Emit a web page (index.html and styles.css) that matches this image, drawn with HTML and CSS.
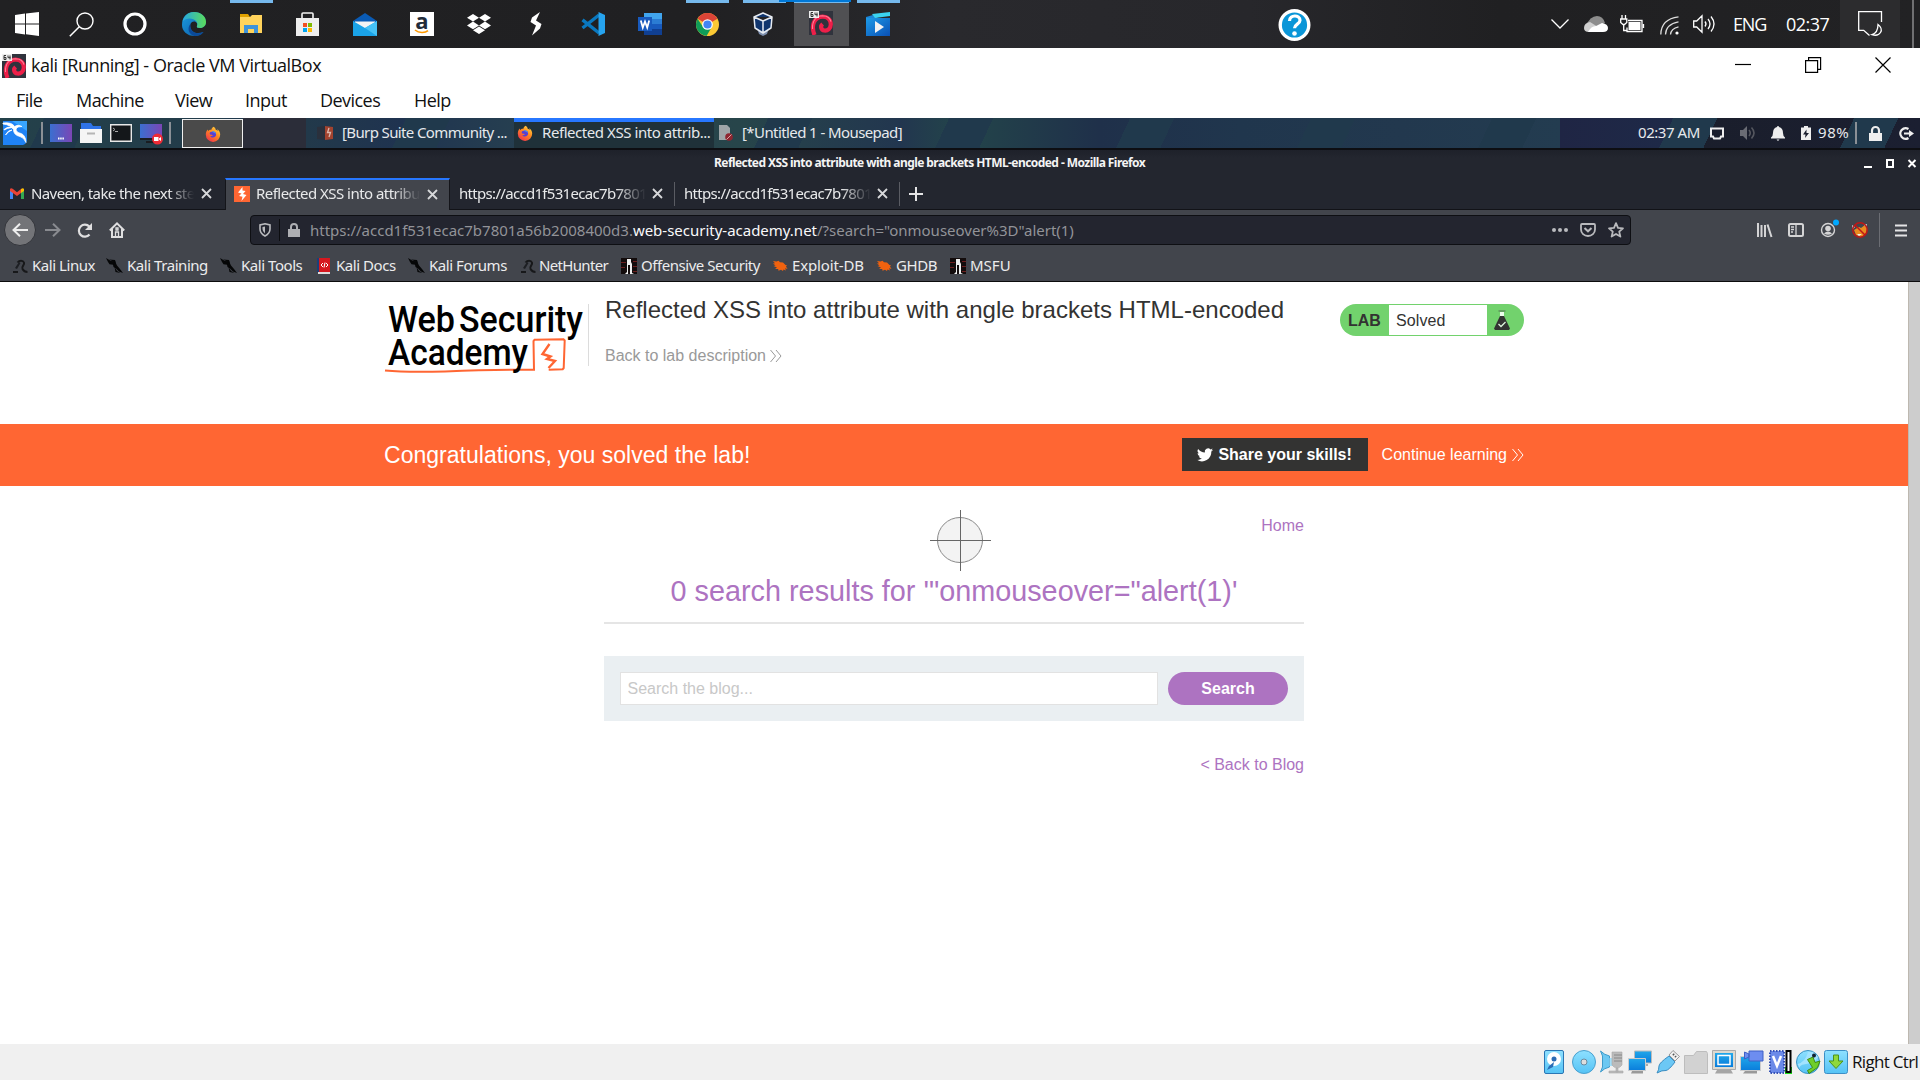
FILE: index.html
```html
<!DOCTYPE html>
<html lang="en">
<head>
<meta charset="utf-8">
<title>kali [Running] - Oracle VM VirtualBox</title>
<link rel="stylesheet" href="styles.css">
</head>
<body>
<svg class="defs" width="0" height="0">
  <defs>
    <linearGradient id="gEdge" x1="0" y1="0" x2="1" y2="1"><stop offset="0" stop-color="#1b9de2"/><stop offset="1" stop-color="#0c59a4"/></linearGradient>
    <linearGradient id="gEdge2" x1="0" y1="0" x2="1" y2="0"><stop offset="0" stop-color="#26a8e0"/><stop offset="1" stop-color="#5bdc5a"/></linearGradient>
    <linearGradient id="gSky" x1="0" y1="0" x2="0" y2="1"><stop offset="0" stop-color="#8ee0ff"/><stop offset="1" stop-color="#55c3f5"/></linearGradient>
    <linearGradient id="gScreen" x1="0" y1="0" x2="0" y2="1"><stop offset="0" stop-color="#21a7ea"/><stop offset="1" stop-color="#0a7ddb"/></linearGradient>
    <linearGradient id="gDesk" x1="0" y1="0" x2="1" y2="0"><stop offset="0" stop-color="#3b6fd0"/><stop offset="1" stop-color="#7b46b5"/></linearGradient>
    <linearGradient id="gFox" x1="0.9" y1="0" x2="0.2" y2="1"><stop offset="0" stop-color="#ffe14a"/><stop offset=".45" stop-color="#ff8a1f"/><stop offset="1" stop-color="#f0304e"/></linearGradient>
    <linearGradient id="gMovie" x1="0" y1="0" x2="1" y2="1"><stop offset="0" stop-color="#1d9be8"/><stop offset="1" stop-color="#0a4fb4"/></linearGradient>
  </defs>
  <symbol id="firefox" viewBox="0 0 16 16"><path fill="url(#gFox)" d="M8.6.8c1.6.9 2 2 2.1 2.9.9.1 1.7.9 2 1.6 0-.9-.2-1.500-.6-2.200 2.100 1.300 3.100 3.500 3.100 5.500a7.200 7.200 0 0 1-14.400.2c0-2.100.7-3.800 2-5.200 0 .8.200 1.200.5 1.500C4 3.700 5.400 3.500 6.400 3.700 6.600 2.500 7.500 1.300 8.600.8z"/><path fill="#5a3fd0" d="M5 6.300C6.200 5.300 8.300 5.600 10 6c1.400 1.300 1.500 3.300.3 4.600-1.500 1.500-4 1.300-5.200-.4 1 .2 2-.3 2.900-.9-.7-.4-1.900-.1-2.800-.7-.6-.5-.6-1.500-.2-2.300z"/><path fill="#3f8cf5" d="M6.500 5.600C8 5 9.300 5.300 10 6c.6.500 1 1.300.9 2-1-1-3-1.200-4.400-2.400z"/></symbol>
  <symbol id="debian" viewBox="0 0 24 24"><rect width="24" height="24" fill="#30333d"/><path d="M5.500 24C1.500 14 5.500 6 13.500 5.700c5-.1 8.300 3 8.300 7.500 0 4.500-3.300 6.800-6.500 6.300-3.300-.6-4.300-4.300-1.700-6.500" fill="none" stroke="#ee1f49" stroke-width="4.200"/><path d="M3.500 18C3 9.500 7.500 5 13.500 4.700c4.500 0 7.500 2 8.500 6" fill="none" stroke="#ff7f97" stroke-width="1.100"/><rect width="10" height="7" fill="#eee"/><path d="M4 1.500H2v4h2v-2H2M6 1.500v2.200h2.500M8 1.500v4" fill="none" stroke="#333" stroke-width="1"/></symbol>
  <symbol id="x" viewBox="0 0 11 11"><path d="M1 1l9 9M10 1l-9 9" stroke="#d7d8da" stroke-width="1.800" fill="none"/></symbol>
  <symbol id="dragon" viewBox="0 0 17 16"><path fill="#050607" d="M0 0l5 3 4 .3 2 4.200L14 11l3 4-4-1.500-3-3L7.500 9 7 6.800 3.500 6.200 2 4z"/><path fill="#050607" d="M8.500 9l2.500 4 3.500 2-5-1zM3 1.500l6 .5L10 5z"/></symbol>
  <symbol id="coil" viewBox="0 0 16 16"><path fill="none" stroke="#17181a" stroke-width="2" d="M1 14h5M5.500 4.500c2-2.500 5.500-2.500 6.500 0s-3 4-1.500 6.500c.8 1.500 3 3 5 3"/><path d="M3 10l4-6 1.500 1-3.500 6z" fill="#1d1f23"/></symbol>
  <symbol id="offsec" viewBox="0 0 16 16"><path fill="#130c0c" d="M0 0h16v16H0z"/><path stroke="#6b1e1e" d="M0 4.500h5M0 9.500h4M12 3.500h4M12 8.500h4M12 13.500h4"/><path fill="#eee" d="M6 1h4v3l1 2v9l2 1H9V7H7v9H4l2-2V6z"/></symbol>
  <symbol id="bug" viewBox="0 0 16 16"><path fill="#f0620f" d="M1 3l3.500.5 2-.8 1.500 1.500 3 .3 2.500 2.500 1.500.3-1 1.200 1.500 2.500-2.500-.8 1 2.300-2.500-1-.5 1.500-2-1.200-2.500 1-.3-1.800L3 11l2-1.500L1.500 8l2-.5L1 5.500l2-.3z"/></symbol>
  <symbol id="chev" viewBox="0 0 12 14"><path d="M.5 1l5 6-5 6M6 1l5 6-5 6" fill="none" stroke="currentColor" stroke-width="1"/></symbol>
</svg>

<header class="taskbar">
  <div class="app"><svg width="24" height="24" viewBox="0 0 24 24"><path fill="#fff" d="M0 3l10-1.400v9.900H0zM11 1.500L24 0v11.500H11zM0 12.500h10v9.900L0 21zM11 12.500h13V24l-13-1.800z"/></svg></div>
  <div class="app"><svg width="25" height="25" viewBox="0 0 25 25"><circle cx="16" cy="9" r="8" fill="none" stroke="#fff" stroke-width="1.400"/><path d="M10.300 14.700L.8 24.200" stroke="#fff" stroke-width="1.500"/></svg></div>
  <div class="app cortana"><svg width="24" height="24"><circle cx="12" cy="12" r="10" fill="none" stroke="#fff" stroke-width="3.200"/></svg></div>
  <div class="app"><svg width="24" height="24" viewBox="0 0 24 24"><path fill="url(#gEdge)" d="M0 13C0 5 5 0 12 0c7 0 12 4.500 12 10 0 3.500-2.500 6-6 6-3 0-3.500-1-3-2 1-2-.5-4.500-3-4.500-3 0-4.500 3-3.500 6.500 1 4 5.500 6.500 13 4C19 23 16 24 12.500 24 5 24 0 19 0 13z"/><path fill="url(#gEdge2)" d="M.5 9.500C2 4 6 0 12 0c7 0 12 4.500 12 10 0 3.500-2.500 6-6 6-3 0-3.500-1-3-2 .8-1.700.4-3.500-1-5C11 5.500 4 5.500.5 9.500z"/><path fill="#0b4a9a" d="M8.500 12c-1 6 4 12 13 8C19 23 16 24 12.500 24 7 23 4.500 16 8.500 12z"/></svg></div>
  <div class="app open"><svg width="22" height="20" viewBox="0 0 22 20"><path fill="#e0a100" d="M0 0h8l2 3H0z"/><path fill="#ffd35c" d="M0 3h10l2-2h10v18H0z"/><path fill="#3e93da" d="M4 11h14v8h-4v-4H8v4H4z"/></svg></div>
  <div class="app"><svg width="24" height="24" viewBox="0 0 24 24"><path d="M6 7V2q0-1 1-1h9q1 0 1 1v5" fill="none" stroke="#f3f3f3" stroke-width="1.600"/><path fill="#eee" d="M0 6h23v18H0z"/><path fill="#f25022" d="M7 11h4v4H7z"/><path fill="#7fba00" d="M12 11h4v4h-4z"/><path fill="#00a4ef" d="M7 16h4v4H7z"/><path fill="#ffb900" d="M12 16h4v4h-4z"/></svg></div>
  <div class="app"><svg width="24" height="24" viewBox="0 0 24 24"><path fill="#0a5bb5" d="M0 9l12-8 12 8v5H0z"/><path fill="#f4f4f4" d="M2 9.500h20V14l-10 3L2 14z"/><path fill="#1aa3e8" d="M0 9l12 7 12-7v15H0z"/><path fill="#45c1f5" d="M24 9v15L12 16z"/></svg></div>
  <div class="app"><div class="amazon">a<svg width="16" height="5" viewBox="0 0 16 5"><path d="M1 1c4 3.300 10 3.300 13 .6" fill="none" stroke="#f90" stroke-width="1.600"/></svg></div></div>
  <div class="app"><svg width="24" height="20" viewBox="0 0 24 20"><path fill="#fff" d="M6 0l6 3.800-6 3.800L0 3.800zM18 0l6 3.800-6 3.800-6-3.800zM6 7.600l6 3.800-6 3.800-6-3.800zM18 7.600l6 3.800-6 3.800-6-3.800zM6 16.200l6-3.800 6 3.800-6 3.800z"/></svg></div>
  <div class="app"><svg width="12" height="24" viewBox="0 0 12 24"><path fill="#fff" d="M10 0L2 5.500.5 10l5.500 3.500L2 23.500l8-7L11.500 12 6 8.500z"/></svg></div>
  <div class="app"><svg width="24" height="24" viewBox="0 0 24 24"><path d="M1.500 7.800L18 21M1.500 16L18 3" stroke="#0a78bf" stroke-width="3.400"/><path fill="#26a3ee" d="M17.500 0L24 3v18l-6.500 3z"/></svg></div>
  <div class="app"><svg width="24" height="22" viewBox="0 0 24 22"><path fill="#41a5ee" d="M6 0h18v6H6z"/><path fill="#2b7cd3" d="M6 6h18v5H6z"/><path fill="#185abd" d="M6 11h18v5H6z"/><path fill="#103f91" d="M6 16h18v6H6z"/><path fill="#185abd" d="M0 4h14v14H0z"/><path d="M2.800 7.500l2 7L7 8.500l2.200 6 2-7" fill="none" stroke="#fff" stroke-width="1.800"/></svg></div>
  <div class="app open"><svg width="23" height="23" viewBox="0 0 24 24"><circle cx="12" cy="12" r="12" fill="#fbc934"/><path fill="#db4437" d="M12 12L1.600 6A12 12 0 0 1 22.400 6z"/><path fill="#0f9d58" d="M1.600 6A12 12 0 0 0 11 24l5.500-9.500L7 14z"/><circle cx="12" cy="12" r="5.600" fill="#fff"/><circle cx="12" cy="12" r="4.300" fill="#4285f4"/></svg></div>
  <div class="app open vbox"><svg width="20" height="24" viewBox="0 0 20 24"><path fill="#7d8fae" d="M4 16h12l-2 6-4 2-4-2z"/><path fill="#10356e" stroke="#e7ecf3" stroke-width="1.500" stroke-linejoin="round" d="M10 1l9 4-1 11-8 5-8-5L1 5zM1 5l9 4 9-4M10 9v12"/></svg></div>
  <div class="app current"><svg width="24" height="24"><use href="#debian"/></svg></div>
  <div class="app open"><svg width="24" height="24" viewBox="0 0 24 24"><path fill="#1b86d8" d="M0 5l7-2 5 3H0z"/><path fill="#3bd3f0" d="M6 2l18-2v4L9 6z"/><path fill="url(#gMovie)" d="M0 6h24v18H0z"/><path fill="#f2f2f2" d="M9 9l9 6-9 6z"/></svg></div>
  <div class="help"><svg width="33" height="34" viewBox="0 0 33 34"><circle cx="16.500" cy="17" r="14.300" fill="#0a96d8" stroke="#fff" stroke-width="3.400"/><path d="M11.500 13c0-6.500 10.500-6.500 10.500-.8 0 4-5.500 3.800-5.500 8" fill="none" stroke="#fff" stroke-width="3.200"/><circle cx="16.500" cy="25.500" r="2.300" fill="#fff"/></svg></div>
  <div class="tray"><svg width="18" height="10"><path d="M.5.5L9 9l8.500-8.500" fill="none" stroke="#fff" stroke-width="1.300"/></svg></div>
  <div class="tray"><svg width="24" height="16" viewBox="0 0 24 16"><path fill="#8d8d8d" d="M2 10Q6 0 13 0q6 0 8 7l-8 3z"/><path fill="#cfcfcf" d="M0 12q0-5 6-6l8 5-8 5H5q-5 0-5-4z"/><path fill="#fff" d="M4 16q3-6 8-6l6-3q6 1 6 5t-5 4z"/></svg></div>
  <div class="tray batt"><svg width="24" height="18" viewBox="0 0 24 18"><path d="M8 5.500h14v11H7v-4M23.500 9v4M2 0v4M5.500 0v4M.7 4h6.100v3.500L4.500 9.500h-1.500L.7 7.500zM3.700 9v6.500h3" fill="none" stroke="#fff" stroke-width="1.300"/><path fill="#fff" d="M8.500 7h12v8h-12z"/></svg></div>
  <div class="tray wifi"><svg width="20" height="19" viewBox="0 0 20 19"><path d="M.8 18.500Q1 3 18.500.8M5.500 18.500Q6 8 18.500 5.800M10.500 18.500Q11 12.500 18.500 10.800" fill="none" stroke="#ddd" stroke-width="1.300"/><circle cx="17" cy="17" r="1.600" fill="#fff"/></svg></div>
  <div class="tray"><svg width="22" height="18" viewBox="0 0 22 18"><path d="M.7 6h3L9 .8v16.400L3.700 12h-3zM12 6.500q2 2.500 0 5M15 4q4 5 0 10M18 1.500q6 7.500 0 15" fill="none" stroke="#fff" stroke-width="1.300"/></svg></div>
  <div class="tray eng">ENG</div>
  <div class="tray clock">02:37</div>
  <div class="tray notif"><svg width="25" height="26" viewBox="0 0 25 26"><path d="M23.500 11V.7H.7v18.600h5l5.800 5.200" fill="none" stroke="#fff" stroke-width="1.300"/><path d="M20 13.500q5 4 2.500 8t-8.500 2.200q6-2 6-10.200z" fill="none" stroke="#fff" stroke-width="1.300"/></svg></div>
  <div class="tray peek"></div>
</header>
<div class="progress"></div>

<section class="titlebar">
  <svg width="24" height="24"><use href="#debian"/></svg>
  <span class="wtitle">kali [Running] - Oracle VM VirtualBox</span>
  <span class="winbtns">
    <svg width="16" height="16"><path d="M0 7.500h16" stroke="#000" stroke-width="1.200"/></svg>
    <svg width="16" height="16"><path d="M.6 3.600h12v11.800H.6zM3.600 3.500V.6h12v11.800h-3" fill="none" stroke="#000" stroke-width="1.200"/></svg>
    <svg width="16" height="16"><path d="M.5.5l15 15M15.500.5l-15 15" stroke="#000" stroke-width="1.200"/></svg>
  </span>
</section>
<nav class="menubar"><span>File</span><span>Machine</span><span>View</span><span>Input</span><span>Devices</span><span>Help</span></nav>

<section class="panel">
  <div class="p"><svg width="24" height="24" viewBox="0 0 24 24"><path fill="#1f83f5" d="M0 0h24v20q-1 3-4 4H0z"/><path fill="#38a5ff" d="M9 0h15v10z"/><path d="M0 2q9-1 11.500 3.500Q15 3 19 5.500q-5-.3-6 2.500 0 3.500 5 4.500 4.500 1.500 5 9-2-5-6-6-6.500-1.500-6.500-7Q7 3.500 0 3zM1 8.500q4-3.500 8-2Q4 7 1 9zM2.500 14q2.500-5 6.500-5-3.500 1-6.500 5z" fill="#fff" stroke="#fff" stroke-width=".8"/></svg></div>
  <div class="p"><i class="vsep"></i></div>
  <div class="p"><svg width="22" height="18"><path fill="url(#gDesk)" d="M0 0h22v18H0z"/><path d="M8 14.500h6" stroke="#fff" stroke-width="2" stroke-dasharray="1.500 .7"/></svg></div>
  <div class="p"><svg width="22" height="20"><path fill="#2f73e8" d="M1 0h10l2 3h8v6H1z"/><path fill="#f5f5f5" d="M0 6h22v14H0z"/><path d="M7 10.500h8" stroke="#b5b5b5" stroke-width="2"/></svg></div>
  <div class="p"><svg width="22" height="18"><path fill="#14171a" stroke="#e8e8e8" stroke-width="1.400" d="M.7.7h20.600v16.600H.7z"/><path d="M3 4l2 1.500L3 7M5 7.500h3" stroke="#aaa" fill="none"/></svg></div>
  <div class="p rec"><svg width="23" height="21"><path fill="url(#gDesk)" d="M0 0h22v14H0z"/><path fill="#1a1d22" d="M0 14h22v2H0zM6 17h8v2H6z"/><circle cx="17.500" cy="15" r="5.500" fill="#ee2b36"/><path fill="#fff" d="M14 13h4.500v4H14zM19 14.500l2-1.500v4l-2-1.500z"/></svg></div>
  <div class="p"><i class="vsep"></i></div>
  <div class="p ffbtn"><svg width="16" height="16"><use href="#firefox"/></svg></div>
  <div class="p gap"></div>
  <div class="p task burp"><svg width="16" height="16"><path fill="#2a303c" d="M0 2l8-1v14l-8-1z"/><path fill="#a2432f" d="M8 1l8 1v12l-8 1z"/><path d="M12 3l-1.500 4.500h3L12 12" stroke="#ddb8ad" fill="none" stroke-width="1.300"/></svg><span>[Burp Suite Community ...</span></div>
  <div class="p task on"><svg width="16" height="16"><use href="#firefox"/></svg><span>Reflected XSS into attrib...</span></div>
  <div class="p task pad"><svg width="16" height="16"><path fill="#9fa5a8" d="M1 0h8l3 3v12H1z"/><circle cx="11" cy="12" r="3.800" fill="#8e2530"/><path d="M8.500 14.500l5-5" stroke="#d9a5a5"/></svg><span>[*Untitled 1 - Mousepad]</span></div>
  <div class="p time"><span>02:37 AM</span></div>
  <div class="p"><svg width="14" height="13"><path d="M1 1.500h12v8h-2l-1 2H4l-1-2H1z" fill="none" stroke="#eee" stroke-width="2"/></svg></div>
  <div class="p"><svg width="16" height="14" viewBox="0 0 16 14"><path fill="#6a6c74" d="M0 4h3l4-4v14l-4-4H0z"/><path d="M9 4q2.500 3 0 6M11.500 1.500q5 5.500 0 11" stroke="#55575f" stroke-width="1.600" fill="none"/></svg></div>
  <div class="p"><svg width="14" height="15" viewBox="0 0 14 15"><path fill="#eee" d="M7 0q1 0 1 1 4 .8 4 6 0 3 2 4.500v1H0v-1Q2 10 2 7q0-5.200 4-6 0-1 1-1zM5.500 13.500h3L7 15z"/></svg></div>
  <div class="p"><svg width="10" height="14" viewBox="0 0 10 14"><path fill="#eee" d="M3 0h4v1.500h3V14H0V1.500h3z"/><path fill="#1a1e2e" d="M5.500 3.500L2 8.500h2.500l-.5 3.500 4-5H5.500z"/></svg></div>
  <div class="p pct"><span>98%</span></div>
  <div class="p"><i class="vsep"></i></div>
  <div class="p"><svg width="13" height="15" viewBox="0 0 13 15"><path fill="#eee" d="M0 7h13v8H0z"/><path d="M3 7V4.500a3.500 3.500 0 0 1 7 0V7" fill="none" stroke="#eee" stroke-width="2.200"/></svg></div>
  <div class="p"><svg width="15" height="13" viewBox="0 0 15 13"><path d="M9.500 2A5.300 5.300 0 1 0 9.500 11" fill="none" stroke="#eee" stroke-width="2.200"/><path d="M5 5.500h5V3l5 3.500-5 3.500V7.500H5z" fill="#eee"/></svg></div>
</section>

<section class="ffbar">
  <span class="fftitle">Reflected XSS into attribute with angle brackets HTML-encoded - Mozilla Firefox</span>
  <span class="ffwin"><svg width="52" height="9"><path d="M0 8h8" stroke="#fff" stroke-width="2"/><path d="M23 1h6v7h-6z" fill="none" stroke="#fff" stroke-width="2"/><path d="M44.500 1l7 7M51.500 1l-7 7" stroke="#fff" stroke-width="2"/></svg></span>
</section>
<section class="tabs">
  <div class="tab gm"><svg width="14" height="11" viewBox="0 0 14 11"><path fill="#4285f4" d="M0 1.500h3V11H0z"/><path fill="#34a853" d="M11 1.500h3V11h-3z"/><path fill="#ea4335" d="M0 1q1-1.500 3 0l4 3.200L11 1v4L7 8 0 3z"/><path fill="#fbbc04" d="M11 1q2-1.500 3 0v2l-3 2z"/></svg><span>Naveen, take the next ste</span><svg width="11" height="11"><use href="#x"/></svg></div>
  <div class="tab sel"><svg width="16" height="16"><path fill="#ff6633" d="M0 0h16v16H0z"/><path fill="#fff" d="M8.500 1L4 6.500l3.500 1L5 10l3.500.8L7.500 15 12.500 9 9 8l2.500-3-3-.5z"/></svg><span>Reflected XSS into attribu</span><svg width="11" height="11"><use href="#x"/></svg></div>
  <div class="tab url"><span>https://accd1f531ecac7b7801</span><svg width="11" height="11"><use href="#x"/></svg></div>
  <div class="tab url last"><span>https://accd1f531ecac7b7801</span><svg width="11" height="11"><use href="#x"/></svg></div>
  <div class="tab plus"><svg width="14" height="14"><path d="M7 0v14M0 7h14" stroke="#e4e4e5" stroke-width="2"/></svg></div>
</section>
<section class="toolbar">
  <div class="t back"><svg width="16" height="14"><path d="M8 .8L1.500 7 8 13.200M1.500 7H16" fill="none" stroke="#eee" stroke-width="2"/></svg></div>
  <div class="t"><svg width="16" height="14"><path d="M8 .8L14.500 7 8 13.200M14.500 7H0" fill="none" stroke="#898b90" stroke-width="2"/></svg></div>
  <div class="t"><svg width="16" height="15"><path d="M12.500 11.500A6 6 0 1 1 12.300 3.600" fill="none" stroke="#dfdfe0" stroke-width="2.200"/><path d="M15 0v7H8z" fill="#dfdfe0"/></svg></div>
  <div class="t"><svg width="16" height="16"><path d="M.8 8.500L8 1.300l7.200 7.200M3 7v8h10V7" fill="none" stroke="#dfdfe0" stroke-width="2"/><path d="M6.500 15v-5h3v5M7 6h2v2H7z" fill="none" stroke="#dfdfe0" stroke-width="1.300"/></svg></div>
  <div class="urlbar">
    <svg class="shield" width="12" height="14"><path d="M6 .8l5 1.200v4q0 4.500-5 7-5-2.500-5-7V2z" fill="none" stroke="#b9babd" stroke-width="1.600"/><path d="M6 3.500v7Q3.500 8.500 3.500 6V4z" fill="#b9babd"/></svg>
    <i></i>
    <svg class="lock" width="12" height="14"><path fill="#aeafb3" d="M0 6h12v8H0z"/><path d="M3 6V4a3 3 0 0 1 6 0v2" fill="none" stroke="#aeafb3" stroke-width="2"/></svg>
    <span class="address">https://accd1f531ecac7b7801a56b2008400d3.<b>web-security-academy.net</b>/?search="onmouseover%3D"alert(1)</span>
    <span class="uicons">
      <svg width="16" height="16"><g fill="#b9babd"><circle cx="2" cy="8" r="2"/><circle cx="8" cy="8" r="2"/><circle cx="14" cy="8" r="2"/></g></svg>
      <svg width="16" height="16"><path d="M2 2h12q1 0 1 1v4.500a7 6.500 0 0 1-14 0V3q0-1 1-1z" fill="none" stroke="#b9babd" stroke-width="1.800"/><path d="M4.500 6L8 9.300 11.500 6" fill="none" stroke="#b9babd" stroke-width="2"/></svg>
      <svg width="16" height="16"><path d="M8 1.200l2 4.700 5 .4-3.800 3.300 1.200 5L8 11.900l-4.400 2.700 1.200-5L1 6.300l5-.4z" fill="none" stroke="#b9babd" stroke-width="1.800" stroke-linejoin="round"/></svg>
    </span>
  </div>
  <div class="t"><svg width="16" height="15"><path d="M1 0v14M4.500 2v12M8 2v12M10.500 1.500l4 12.500" stroke="#d4d4d5" stroke-width="2"/></svg></div>
  <div class="t"><svg width="16" height="14"><rect x="1" y="1" width="14" height="12" rx="1.500" fill="none" stroke="#d4d4d5" stroke-width="2"/><path d="M8 1v12M3 4h3M3 6.500h3M3 9h2" stroke="#d4d4d5" stroke-width="1.300"/></svg></div>
  <div class="t acct"><svg width="20" height="20"><circle cx="8" cy="12" r="6.500" fill="none" stroke="#d4d4d5" stroke-width="1.400"/><circle cx="8" cy="10.500" r="2.800" fill="#d4d4d5"/><path d="M4 15.500q4-4 8 0-4 2.500-8 0z" fill="#d4d4d5"/><circle cx="16" cy="4.500" r="3" fill="#00a8ff"/></svg></div>
  <div class="t"><svg width="16" height="16"><path fill="#ea8c1f" d="M2 8l5-3 2 1 4-3 2 3-1 6-5 3-5-2z"/><path fill="#eee" d="M0 3l3 2-2 2zM5 12l5 0-3 2zM12 3l3-1-1 3z"/><circle cx="8" cy="8" r="7.200" fill="none" stroke="#c01616" stroke-width="1.500"/><path d="M3 3l10 10" stroke="#c01616" stroke-width="1.500"/></svg></div>
  <div class="t bar"></div>
  <div class="t"><svg width="12" height="13"><path d="M0 1.500h12M0 6.500h12M0 11.500h12" stroke="#e4e4e5" stroke-width="2"/></svg></div>
</section>
<section class="bookmarks">
  <div><svg width="16" height="16"><use href="#coil"/></svg><span>Kali Linux</span></div>
  <div><svg width="17" height="16"><use href="#dragon"/></svg><span>Kali Training</span></div>
  <div><svg width="17" height="16"><use href="#dragon"/></svg><span>Kali Tools</span></div>
  <div class="docs"><svg width="14" height="16"><path fill="#d6181f" d="M1 0h12v14H1z"/><path fill="#1c3f78" d="M0 0h2v14H0z"/><path fill="#ddd" d="M1 14h12v2H1z"/><path d="M6 5L4 7l2 2M9 5l2 2-2 2M8 4.500l-1 5" stroke="#fff" fill="none"/></svg><span>Kali Docs</span></div>
  <div><svg width="17" height="16"><use href="#dragon"/></svg><span>Kali Forums</span></div>
  <div class="nh"><svg width="16" height="16"><use href="#coil"/></svg><span>NetHunter</span></div>
  <div><svg width="16" height="16"><use href="#offsec"/></svg><span>Offensive Security</span></div>
  <div class="edb"><svg width="16" height="16"><use href="#bug"/></svg><span>Exploit-DB</span></div>
  <div><svg width="16" height="16"><use href="#bug"/></svg><span>GHDB</span></div>
  <div class="msfu"><svg width="16" height="16"><use href="#offsec"/></svg><span>MSFU</span></div>
</section>

<div class="viewport">
  <main class="page">
    <div class="labhead">
      <svg class="logo" width="204" height="84" viewBox="384 292 204 84">
        <path d="M385 370.500q20 2 60 1 50-2 89-1.800l-.5-28.700 1-1.200 29-.5 1.200 1.200-1 27.500-1 1.200-14 .6" fill="none" stroke="#ff6633" stroke-width="2"/>
        <path d="M549.500 344l-7 10 8 2.500-3.500 2.500 8 2-6.500 7" fill="none" stroke="#ff6633" stroke-width="2.400"/>
        <g class="logotext"><text x="388" y="332" textLength="67" lengthAdjust="spacingAndGlyphs">Web</text><text x="459" y="332" textLength="124" lengthAdjust="spacingAndGlyphs">Security</text><text x="388" y="364.500" textLength="140" lengthAdjust="spacingAndGlyphs">Academy</text></g>
      </svg>
      <div class="vline"></div>
      <div class="titles"><h2>Reflected XSS into attribute with angle brackets HTML-encoded</h2><a>Back to lab description <svg width="12" height="14"><use href="#chev"/></svg></a></div>
      <div class="status"><b>LAB</b><span>Solved</span><svg width="16" height="20"><path d="M4.500 1h7" stroke="#5f8f5d" stroke-width="1.500"/><path fill="#eafbe9" d="M6 2h4v4H6z"/><path fill="#333332" d="M6 6h4l6 12.500-1 1.500H1L0 18.500z"/><path d="M4.500 14l2.500 2.500 4.500-4.500" fill="none" stroke="#dff5de" stroke-width="1.300"/></svg></div>
    </div>
    <div class="banner"><div class="inner">
      <h4>Congratulations, you solved the lab!</h4>
      <button><svg width="16" height="14" viewBox="0 0 24 20"><path fill="#fff" d="M24 2.300a10 10 0 0 1-2.800.8A5 5 0 0 0 23.300.4a10 10 0 0 1-3.100 1.200 4.900 4.900 0 0 0-8.400 4.500A14 14 0 0 1 1.700.9a4.900 4.900 0 0 0 1.500 6.600A5 5 0 0 1 1 6.900a4.900 4.900 0 0 0 3.900 4.900 5 5 0 0 1-2.200.1 4.900 4.900 0 0 0 4.600 3.400A9.900 9.900 0 0 1 0 17.300a14 14 0 0 0 21.500-12.400A10 10 0 0 0 24 2.300z"/></svg>Share your skills!</button>
      <a>Continue learning <svg width="12" height="14"><use href="#chev"/></svg></a>
    </div></div>
    <div class="blog">
      <a class="home">Home</a>
      <h1>0 search results for '"onmouseover="alert(1)'</h1>
      <form class="search"><input type="text" placeholder="Search the blog..."><button type="button">Search</button></form>
      <a class="backblog">&lt; Back to Blog</a>
    </div>
  </main>
  <div class="scroll"></div>
</div>
<svg class="crosshair" width="62" height="62"><circle cx="30" cy="31" r="22.500" fill="#f3f3f3" stroke="#8a8a8a"/><path d="M30.500 1v61M0 31.500h61" stroke="#666" stroke-width="1"/></svg>

<footer class="vmstatus">
  <svg class="disk" width="24" height="24"><rect x="2.500" y=".5" width="19" height="23" rx="1.500" fill="url(#gSky)" stroke="#2a76b4"/><circle cx="12" cy="9" r="7" fill="#fff"/><circle cx="12" cy="9" r="2.500" fill="#2b6cb5"/><path d="M5 20l6-3 1-5-5 4z" fill="#2b6cb5"/></svg>
  <svg width="24" height="24"><circle cx="12" cy="12" r="11.500" fill="url(#gSky)" stroke="#4aa0cf"/><circle cx="12" cy="12" r="3" fill="#ddd" stroke="#6a8ba0"/></svg>
  <svg width="24" height="24"><path d="M.5 1q4 4 9 5v11q-5 1-9 5l2-5V6z" fill="#6cc8f2" stroke="#3f9ccc"/><path d="M9.500 8v8h5V8z" fill="#a4dff8"/><path d="M12 2h10v13q-2 3-5 3t-5-3zM9 21h14v2H9zM16 18h2v4h-2z" fill="#bbb" stroke="#aaa" stroke-width=".6"/><path d="M14 5h8M14 8h8M14 11h8" stroke="#888"/></svg>
  <svg width="24" height="24"><path d="M6.500 1h17v12h-17z" fill="url(#gScreen)" stroke="#bbb"/><path d="M12 14h8v2h-8z" fill="#aaa"/><path d="M.5 8.500h17v12H.5z" fill="url(#gScreen)" stroke="#ccc"/><path d="M4 21h11v2.500H3z" fill="#999"/></svg>
  <svg width="24" height="24"><path d="M1 23q2-3 2-7 0-3 10-10l6 6q-6 8-9 8.500-4-.5-9 2.500z" fill="#6cc8f5" stroke="#3a8cc0"/><path d="M13 5l4-4.500 6.500 6L19 11z" fill="#f1f1f1" stroke="#999"/><path d="M17 4l3 3" stroke="#555" stroke-width="2" stroke-dasharray="1.500 1.500"/></svg>
  <svg width="24" height="24"><path d="M.5 5.500h9l3-4h10l1 2v20H.5z" fill="#d2d2d2" stroke="#bdbdbd"/></svg>
  <svg width="24" height="24"><path d="M.5.500h23v19H.5z" fill="#dcd9d0" stroke="#aaa"/><path d="M3 3h18v14H3z" fill="url(#gScreen)"/><path d="M6 5.500h12v9H6z" fill="none" stroke="#fff" stroke-width="1.500"/><path d="M5 20h14l2 3.500H3z" fill="#a5a5a5"/></svg>
  <svg width="24" height="24"><path d="M.5 6.500h20v14H.5z" fill="url(#gScreen)" stroke="#ccc"/><path d="M5 21h12v2.500H3z" fill="#999"/><path d="M9 1h14v10H9zM9 4L4.500 2v7L9 7z" fill="#6d8df0" stroke="#3f60c5"/></svg>
  <svg width="24" height="24"><path d="M2 1h14v22H2z" fill="#6b8ae8" stroke="#3551b5" stroke-dasharray="1.500 1.500" stroke-width="2"/><path d="M5 6l4 10 4-10" fill="none" stroke="#fff" stroke-width="2.500"/><path fill="#1be01b" d="M17 17h7v7h-7z"/><path d="M18.500 1h4v21h-4z" fill="#fff" stroke="#000" stroke-width="2"/></svg>
  <svg width="24" height="24"><circle cx="12" cy="12" r="11.500" fill="url(#gSky)" stroke="#3b92c4"/><path d="M1.500 14q8-2 10.500-12 6-1 10 5-3 6-12 7T5 20z" fill="#a3e3ff"/><path d="M11.500 9.500L17 7l2 5.500 5-1.500-2.500 6.500L13 23.500l-1.500-3 5-3z" fill="#6fce2a" stroke="#3f8a12"/><circle cx="18" cy="5.500" r="2" fill="#123"/></svg>
  <svg width="24" height="24"><rect x=".5" y=".5" width="23" height="23" rx="2" fill="url(#gSky)" stroke="#3c8fc6"/><path d="M9.500 5h5v6h4.500L12 18.500 5 11h4.500z" fill="#8fd83c" stroke="#4b921c"/></svg>
  <span>Right Ctrl</span>
</footer>
</body>
</html>
```
FILE: styles.css
```css
* { box-sizing: border-box; }
body { margin: 0; width: 1920px; height: 1080px; overflow: hidden; background: #fff; display: flex; flex-direction: column; font-family: "Liberation Sans", Arial, sans-serif; }
h1, h2, h4 { margin: 0; font-weight: 400; }
svg { display: block; flex: none; overflow: visible; }
span, a, b { white-space: nowrap; }
.defs { position: absolute; }

/* Host taskbar */
.taskbar { height: 48px; flex: none; background: linear-gradient(90deg, #212123 0, #202022 700px, #29292d 950px, #27272b 1250px, #202022 1500px, #222224 100%); display: grid; grid-template-columns: 54px 54px 57.5px repeat(13, 57px) 644.5px 33px 36px 40px 33px 40px 53px 54px 60px 20px; font: 18px "Open Sans", sans-serif; color: #fff; }
.app { display: flex; align-items: center; justify-content: center; }
.cortana { padding-right: 4px; }
.app.open { background: linear-gradient(#76b9ed, #76b9ed) 50% 0 / 43px 3px no-repeat; }
.vbox { padding-right: 2px; }
.app.current { background: linear-gradient(#76b9ed 3px, #505053 3px); height: 46px; margin: 0 1px; }
.amazon { width: 24px; height: 24px; background: #fff; color: #222c3a; font: bold 22px/17px "Open Sans", sans-serif; padding: 0 4px; display: flex; flex-direction: column; align-items: center; }
.help { padding: 8px 0 0 371.5px; }
.tray { display: flex; align-items: center; }
.tray.wifi { padding-top: 2px; }
.eng { letter-spacing: -1.200px; }
.clock { letter-spacing: -.5px; }
.notif { background: #2c2c2e; justify-content: center; }
.peek { margin-left: 12px; border-left: 2px solid #707072; }
.progress { position: absolute; left: 779px; top: 0; width: 72px; height: 2px; background: #0078d7; }

/* VM window chrome */
.titlebar { height: 36px; flex: none; display: flex; align-items: center; padding-left: 2px; font: 18px "Open Sans", sans-serif; letter-spacing: -.46px; color: #111; }
.wtitle { margin-left: 5px; padding-bottom: 3px; }
.winbtns { margin-left: auto; display: flex; gap: 54px; padding-right: 29px; padding-bottom: 2px; }
.menubar { height: 34px; flex: none; display: grid; grid-template-columns: 60px 99px 70px 75px 94px auto; padding: 0 0 3px 16px; align-items: center; font: 18px "Open Sans", sans-serif; letter-spacing: -.55px; color: #111; }

/* Guest panel */
.panel { height: 30px; flex: none; display: grid; grid-template-columns: 38px 9px 30px 30px 30px 29px 13px 61px 63px 208px 200px 924px 72px 30px 31px 30px 17px 37px 14px 30px 18px; padding-left: 3px; color: #e6e9ec; font: 15px "Noto Sans", sans-serif; letter-spacing: -.45px;
  background:
    linear-gradient(115deg, transparent 40px, #20394c 40px 80px, transparent 80px) 0 0 / 181px 30px,
    linear-gradient(90deg, #24414a 0, #22394a 306px, #1f3350 400px, #263f50 520px, #27454a 740px, #22364f 900px, #23454a 960px, #1f304a 1100px, #20364d 1240px, #22384e 1400px, #233c50 1560px, #1f2544 1560px, #1e2a48 1680px, #1a1e2b 1680px, #1b1f31 100%); }
.p { display: flex; align-items: center; }
.p span { padding-bottom: 2px; }
.p.rec { padding-top: 2px; }
.vsep { width: 2px; height: 22px; background: #8b9096; }
.ffbtn { border: 1px solid #f0f0f0; background: #4a4a4a; justify-content: center; margin-top: 1px; }
.gap { background: #2b2d39; }
.task svg { margin-right: 9px; }
.burp { padding-left: 11px; letter-spacing: -.62px; }
.task.on { background: #1f3139; border-top: 4px solid #2777ff; padding-bottom: 4px; padding-left: 3px; letter-spacing: -.44px; }
.pad { padding-left: 4px; letter-spacing: -.59px; }
.pad svg { margin-right: 8px; }
.pct { letter-spacing: .6px; }

/* Browser chrome */
.ffbar { height: 30px; flex: none; background: linear-gradient(#0d0e12 0 2px, #1e212a 2px, #23262f 10px); display: flex; align-items: center; color: #f4f4f4; font: bold 12px "Noto Sans", sans-serif; letter-spacing: -.57px; }
.fftitle { margin-left: 714px; padding-bottom: 1px; }
.ffwin { margin-left: auto; padding-right: 4px; padding-top: 1px; }
.tabs { height: 32px; flex: none; background: #23262f; border-bottom: 1px solid #121318; display: grid; grid-template-columns: 225px 225px 225px 225px 60px; color: #e8e9ea; font: 15px "Noto Sans", sans-serif; letter-spacing: -.6px; }
.tab { display: flex; align-items: center; min-width: 0; }
.tab span { overflow: hidden; width: 164px; padding-bottom: 2px; -webkit-mask-image: linear-gradient(90deg, #000 84%, transparent 100%); mask-image: linear-gradient(90deg, #000 84%, transparent 100%); }
.tab svg:last-child { margin-left: 7px; }
.gm { padding-left: 10px; }
.gm svg:first-child { margin-right: 7px; }
.gm span { width: 163px; }
.sel { background: #42454c; border-top: 2px solid #2777ff; border-left: 1px solid #14151a; border-right: 1px solid #14151a; margin-bottom: -1px; padding-left: 8px; letter-spacing: -.54px; padding-bottom: 2px; }
.sel svg:first-child { margin-right: 6px; }
.url { padding-left: 9px; background: linear-gradient(#5a5c63, #5a5c63) 100% 4px / 1px 24px no-repeat; letter-spacing: -.69px; }
.url span { width: 187px; }
.tab.url svg:last-child { margin-left: 6px; }
.plus { padding-left: 9px; }
.tab.plus svg:last-child { margin: 0; }
.toolbar { height: 41px; flex: none; background: #42454c; display: grid; grid-template-columns: 41px 32px 32px 141px 1507px 31px 32px 32px 27px 16px auto; padding: 0 0 1px 4px; align-items: center; }
.t { display: flex; align-items: center; }
.back { width: 32px; height: 32px; border-radius: 50%; background: #737478; border: 1px solid #33353b; justify-content: center; }
.acct { padding-bottom: 4px; }
.bar { width: 1px; height: 34px; background: #6b6d73; }
.urlbar { width: 1381px; height: 30px; border: 1px solid #0e0f13; border-radius: 4px; background: #23252f; display: flex; align-items: center; padding-left: 8px; color: #929398; font: 15px "Noto Sans", sans-serif; letter-spacing: -.01px; }
.urlbar i { width: 1px; height: 22px; background: #0c0d10; margin: 0 8px; }
.address { padding-bottom: 1px; }
.lock { margin-right: 10px; }
.urlbar b { font-weight: 400; color: #f9f9fa; }
.uicons { margin-left: auto; display: flex; gap: 12px; padding-right: 6px; }
.bookmarks { height: 31px; flex: none; background: #42454c; border-bottom: 1px solid #0c0c0d; display: grid; grid-template-columns: 94px 114px 97px 91px 112px 101px 151px 104px 74px auto; padding-left: 12px; color: #ececed; font: 15px "Noto Sans", sans-serif; letter-spacing: -.45px; }
.bookmarks div { display: flex; align-items: center; }
.bookmarks span { padding-bottom: 2px; }
.bookmarks svg { margin-right: 4px; }
.bookmarks .docs svg { margin-right: 5px; }
.bookmarks .nh svg { margin-right: 3px; }
.nh { letter-spacing: -.67px; }
.edb { letter-spacing: -.13px; }
.msfu { letter-spacing: 0; }

/* Lab page */
.viewport { height: 762px; flex: none; display: flex; }
.page { width: 1908px; }
.scroll { width: 12px; background: #cdcdcd; border-left: 1px solid #bdb8b0; }
.labhead { width: 1140px; height: 142px; margin-left: 384px; padding-top: 10px; display: flex; }
.logo { width: 204px; }
.logotext { font: 500 36px Roboto, sans-serif; fill: #000; }
.vline { width: 1px; height: 62px; margin-top: 12px; background: #dcdcdc; }
.titles { margin-left: 16px; flex: 1; color: #333332; }
.titles h2 { font-size: 24px; line-height: 28px; margin-top: 4px; white-space: nowrap; }
.titles a { display: flex; align-items: center; gap: 4px; font-size: 16px; line-height: 20px; color: #999; margin-top: 22px; }
.status { width: 184px; height: 32px; margin-top: 12px; background: #72d26d; border-radius: 16px; padding: 1px 0 1px 8px; display: flex; align-items: center; color: #333332; font-size: 16px; }
.status b { width: 41px; padding-top: 2px; }
.status span { width: 98px; height: 30px; line-height: 31px; background: #fff; padding-left: 7px; margin-right: 7px; letter-spacing: .1px; }
.banner { height: 62px; background: #ff6633; color: #fff; }
.inner { width: 1140px; height: 62px; margin-left: 384px; display: flex; align-items: center; }
.inner h4 { font-size: 23px; letter-spacing: .02px; width: 798px; }
.banner button { width: 186px; height: 33px; border: 0; padding: 0; background: #333332; color: #fff; font: bold 16px "Liberation Sans", sans-serif; display: flex; align-items: center; justify-content: center; gap: 5px; margin-top: -1px; }
.inner a { display: flex; align-items: center; gap: 5px; margin-left: 14px; font-size: 16px; }
.blog { width: 700px; margin-left: 604px; padding-top: 31px; display: flex; flex-direction: column; color: #ad73c1; font-size: 16px; line-height: 18px; }
.home { align-self: flex-end; }
.blog h1 { font-size: 28.800px; line-height: 40px; text-align: center; margin-top: 36px; height: 53px; border-bottom: 2px solid #e5e5e5; white-space: nowrap; }
.search { height: 65px; margin-top: 32px; background: #eaeff2; padding: 16px; display: flex; gap: 10px; }
.search input { width: 538px; height: 33px; border: 1px solid #e2e2e2; padding: 0 6.500px; background: #fff; font: 16px "Liberation Sans", sans-serif; }
.search input::placeholder { color: #c8c8c8; opacity: 1; }
.search button { width: 120px; height: 33px; border: 0; border-radius: 16.500px; background: #ad73c1; color: #fff; font: bold 16px "Liberation Sans", sans-serif; }
.backblog { align-self: flex-end; margin-top: 35px; }
.crosshair { position: absolute; left: 930px; top: 509px; }

/* VM status strip */
.vmstatus { height: 36px; flex: none; background: #f0f0f0; display: flex; align-items: center; gap: 4px; padding-left: 1542px; font: 17px "Open Sans", sans-serif; letter-spacing: -.68px; color: #111; }
.vmstatus .disk { margin-right: 2px; }
.vmstatus span { padding-bottom: 2px; }
```
